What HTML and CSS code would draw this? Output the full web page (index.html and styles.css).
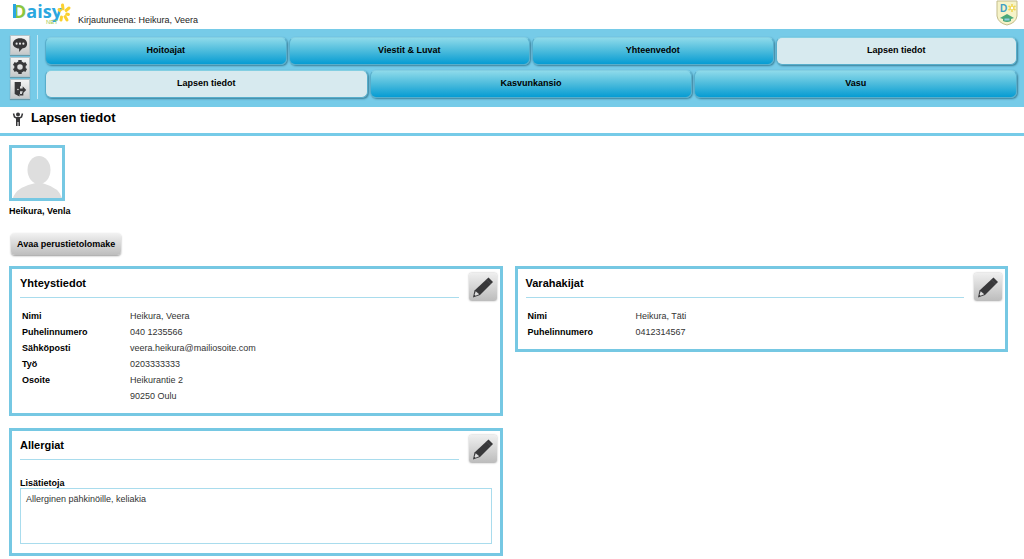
FILE: index.html
```html
<!DOCTYPE html>
<html lang="fi">
<head>
<meta charset="utf-8">
<meta name="viewport" content="width=device-width, initial-scale=1">
<title>DaisyNet – Lapsen tiedot</title>
<link rel="stylesheet" href="styles.css">
</head>
<body>
<svg class="defs" aria-hidden="true">
  <symbol id="pencil" viewBox="0 0 28 28">
    <path d="M19.500 4.500 L24 9 L11 22 L4 24.500 L5.500 17.500Z" fill="#38383a"/>
    <path d="M6.700 18.200 L10.200 21.300 L6.500 22.800 L5.500 21.800Z" fill="#dcdcdc"/>
    <path d="M17.500 6.800 L21.700 11" stroke="#56565a" stroke-width=".6"/>
  </symbol>
</svg>
<header class="topbar">
  <svg class="logo" viewBox="0 0 60 26" role="img" aria-label="Daisy NET">
    <text class="logo-word" x="1" y="18"><tspan class="logo-d">D</tspan><tspan>aisy</tspan></text>
    <path d="M2.500 4 V18" stroke="#2ba7df" stroke-width="3"/>
    <g stroke="#fbd130" stroke-width="3" stroke-linecap="round">
      <path d="M51 9 L50.500 5M54 10.500 L57 8M54.500 14 L56.500 14.500M53 16.500 L55 20M49.500 17 L49 20M48.500 11 L47 9.500"/>
    </g>
    <circle cx="51" cy="13" r="2.500" fill="#fff"/>
    <text class="logo-net" x="34" y="24">NET</text>
  </svg>
  <span class="user">Kirjautuneena: Heikura, Veera</span>
  <svg class="crest" viewBox="0 0 22 26" role="img" aria-label="Vaakuna">
    <path d="M1 1H21V16Q20 23 11 25Q2 23 1 16Z" fill="#f6f3c8" stroke="#c3bd8b"/>
    <text class="crest-d" x="4" y="12">D</text>
    <path d="M16 4V12M12.500 6 L19.500 10M19.500 6 L12.500 10" stroke="#efd654" stroke-width="1.600"/>
    <circle cx="16" cy="8" r="1.200" fill="#fff"/>
    <path d="M4 18 L11 14 L18 18 L15 19 V21 Q11 23 7 21 V19Z" fill="#4aa879"/>
    <path d="M8.500 18.500H13.500V20.500H8.500Z" fill="#8ccde0"/>
  </svg>
</header>
<div class="navband">
  <div class="tools">
    <button class="tool" type="button" aria-label="Viestit"><svg viewBox="0 0 18 18">
      <path d="M9 1.500C14 1.500 17 4 17 7.500S14.500 12.500 11.500 12.800L8 17V13C4 12.500 1 10.500 1 7.500S4 1.500 9 1.500Z" fill="#38383a"/>
      <g fill="#e6e6e6"><circle cx="5.200" cy="7.500" r="1.200"/><circle cx="9" cy="7.500" r="1.200"/><circle cx="12.800" cy="7.500" r="1.200"/></g></svg></button>
    <button class="tool" type="button" aria-label="Asetukset"><svg viewBox="0 0 18 18">
      <circle cx="9" cy="9" r="4.800" fill="none" stroke="#38383a" stroke-width="3.400"/>
      <path d="M9 1V4M9 14V17M2 5 L4.500 6.500M13.500 11.500 L16 13M2 13 L4.500 11.500M13.500 6.500 L16 5" stroke="#38383a" stroke-width="3.800"/></svg></button>
    <button class="tool" type="button" aria-label="Kirjaudu ulos"><svg viewBox="0 0 18 18">
      <path d="M3 1H10V6H9V15H8.500V17.500L3 14.500Z" fill="#38383a"/>
      <path d="M8 8.500H12V6L16 10L12 14V11.500H8Z" fill="#38383a"/>
      <path d="M9 15.500H12V13" fill="none" stroke="#38383a" stroke-width="1.500"/>
      <circle cx="6.700" cy="9.500" r=".9" fill="#ddd"/></svg></button>
  </div>
  <nav class="menus" aria-label="Päävalikko">
    <div class="menu">
      <a class="tab" href="#">Hoitoajat</a>
      <a class="tab" href="#">Viestit &amp; Luvat</a>
      <a class="tab" href="#">Yhteenvedot</a>
      <a class="tab active" href="#" aria-current="page">Lapsen tiedot</a>
    </div>
    <div class="menu">
      <a class="tab active" href="#" aria-current="page">Lapsen tiedot</a>
      <a class="tab" href="#">Kasvunkansio</a>
      <a class="tab" href="#">Vasu</a>
    </div>
  </nav>
</div>
<div class="pagehead">
  <svg class="child" viewBox="0 0 12 14" aria-hidden="true">
    <circle cx="6" cy="2.500" r="2" fill="#38383a"/>
    <path d="M1.500 1.500 L2.500 5 L4.500 6H7.500L9.500 5L10.500 1.500" fill="none" stroke="#38383a" stroke-width="1.500"/>
    <path d="M4 5H8V14H6.500V10H5.500V14H4Z" fill="#38383a"/>
  </svg>
  <h1>Lapsen tiedot</h1>
</div>
<main class="content">
  <section class="profile">
    <svg class="photo" viewBox="0 0 50 50" role="img" aria-label="Heikura, Venla">
      <ellipse cx="27" cy="22" rx="11.500" ry="14" fill="#dedede"/>
      <path d="M1 50Q4 40 20 36L27 34L33 36Q47 40 50 50Z" fill="#dedede"/>
    </svg>
    <div class="name">Heikura, Venla</div>
    <button class="open" type="button">Avaa perustietolomake</button>
  </section>
  <div class="columns">
    <div class="column">
      <section class="card">
        <div class="cardhead"><h2>Yhteystiedot</h2>
          <button class="edit" type="button" aria-label="Muokkaa yhteystietoja"><svg><use href="#pencil"/></svg></button></div>
        <dl class="facts">
          <dt>Nimi</dt><dd>Heikura, Veera</dd>
          <dt>Puhelinnumero</dt><dd>040 1235566</dd>
          <dt>Sähköposti</dt><dd>veera.heikura@mailiosoite.com</dd>
          <dt>Työ</dt><dd>0203333333</dd>
          <dt>Osoite</dt><dd>Heikurantie 2<br>90250 Oulu</dd>
        </dl>
      </section>
      <section class="card">
        <div class="cardhead"><h2>Allergiat</h2>
          <button class="edit" type="button" aria-label="Muokkaa allergioita"><svg><use href="#pencil"/></svg></button></div>
        <div class="field">
          <label for="info">Lisätietoja</label>
          <textarea id="info" readonly>Allerginen pähkinöille, keliakia</textarea>
        </div>
      </section>
    </div>
    <div class="column">
      <section class="card">
        <div class="cardhead"><h2>Varahakijat</h2>
          <button class="edit" type="button" aria-label="Muokkaa varahakijoita"><svg><use href="#pencil"/></svg></button></div>
        <dl class="facts">
          <dt>Nimi</dt><dd>Heikura, Täti</dd>
          <dt>Puhelinnumero</dt><dd>0412314567</dd>
        </dl>
      </section>
    </div>
  </div>
</main>
</body>
</html>
```
FILE: styles.css
```css
* { box-sizing: border-box; }
body {
  margin: 0;
  background: #fff;
  color: #000;
  font: 9px/16px "Liberation Sans", Arial, sans-serif;
}
button, textarea { font: inherit; color: inherit; }
h1, h2, dl, dd { margin: 0; }
.defs { position: absolute; width: 0; height: 0; }

.topbar {
  display: flex;
  align-items: flex-start;
  height: 29px;
  padding: 0 6px 0 12px;
}
.logo { width: 60px; height: 26px; overflow: visible; }
.logo-word { font: 700 18px "Open Sans", sans-serif; fill: #2ba7df; }
.logo-d { fill: #8cc63f; }
.logo-net { font: 6px "Liberation Sans", sans-serif; fill: #a2c94a; }
.user { margin: 12px auto 0 6px; color: #222; }
.crest { width: 22px; height: 26px; }
.crest-d { font: 700 10px "Liberation Sans", sans-serif; fill: #3e9fc4; }

.navband {
  display: flex;
  gap: 7px;
  padding: 6px 7px 8px 10px;
  background: #76cbe8;
}
.tools {
  display: flex;
  flex-direction: column;
  gap: 2px;
  padding-right: 7px;
  border-right: 1px solid #c4eaf6;
}
.tool {
  width: 20px;
  height: 20px;
  padding: 1px;
  border: 1px solid #b4c4ca;
  background: linear-gradient(#f4f4f4, #c6c9ca);
  box-shadow: 0 1px 1px #6599aa;
}
.tool svg, .edit svg { display: block; width: 100%; height: 100%; }
.menus {
  flex: 1;
  display: flex;
  flex-direction: column;
  gap: 5px;
  padding-top: 2px;
}
.menu { display: flex; gap: 2px; }
.tab {
  flex: 1;
  height: 28px;
  border: 1px solid #58aecb;
  border-top-color: #83cfe2;
  border-radius: 6px;
  background: linear-gradient(#8edaea, #4bbbdc 50%, #069cd3);
  box-shadow: 1px 1px 2px #397f98;
  color: #000;
  font-weight: 700;
  line-height: 25px;
  text-align: center;
  text-decoration: none;
}
.tab.active { background: #d7eaef; }

.pagehead {
  display: flex;
  gap: 7px;
  height: 29px;
  padding: 3px 12px 0;
  border-bottom: 3px solid #76cbe8;
}
.pagehead h1 { font-size: 13px; line-height: 16px; }
.child { width: 12px; height: 14px; margin-top: 2px; }

.content { padding: 9px 16px 3px 9px; }
.profile {
  display: flex;
  flex-direction: column;
  align-items: flex-start;
}
.photo { width: 56px; height: 56px; border: 3px solid #76c8e3; }
.name { margin-top: 2px; font-weight: 700; }
.open {
  height: 22px;
  margin: 14px 0 11px 2px;
  padding: 0 6px;
  border: 0;
  border-radius: 4px;
  background: linear-gradient(#f2f2f2, #bdbdbd);
  box-shadow: 0 1px 2px #999;
  font-weight: 700;
}

.columns {
  display: grid;
  grid-template-columns: 1fr 1fr;
  gap: 12px;
}
.column {
  display: flex;
  flex-direction: column;
  gap: 12px;
}
.card {
  padding: 3px 3px 9px 8px;
  border: 3px solid #76c8e3;
}
.cardhead { display: flex; gap: 10px; }
.cardhead h2 {
  flex: 1;
  height: 26px;
  padding-top: 3px;
  border-bottom: 1px solid #a9dced;
  font-size: 11px;
  line-height: 16px;
}
.edit {
  width: 28px;
  height: 28px;
  margin-top: 1px;
  padding: 0;
  border: 0;
  border-radius: 3px;
  background: linear-gradient(#efefef, #bcbcbc);
  box-shadow: 0 0 2px #aaa;
}
.facts {
  display: grid;
  grid-template-columns: 108px 1fr;
  padding: 7px 2px 0;
}
.facts dt { font-weight: 700; }
.facts dd { color: #333; }
.field { padding: 12px 5px 0 0; }
.field label {
  display: block;
  height: 13px;
  font-weight: 700;
}
.field textarea {
  display: block;
  width: 100%;
  height: 56px;
  padding: 2px 5px;
  border: 1px solid #a9dced;
  background: #fff;
  color: #333;
  resize: none;
}
```
